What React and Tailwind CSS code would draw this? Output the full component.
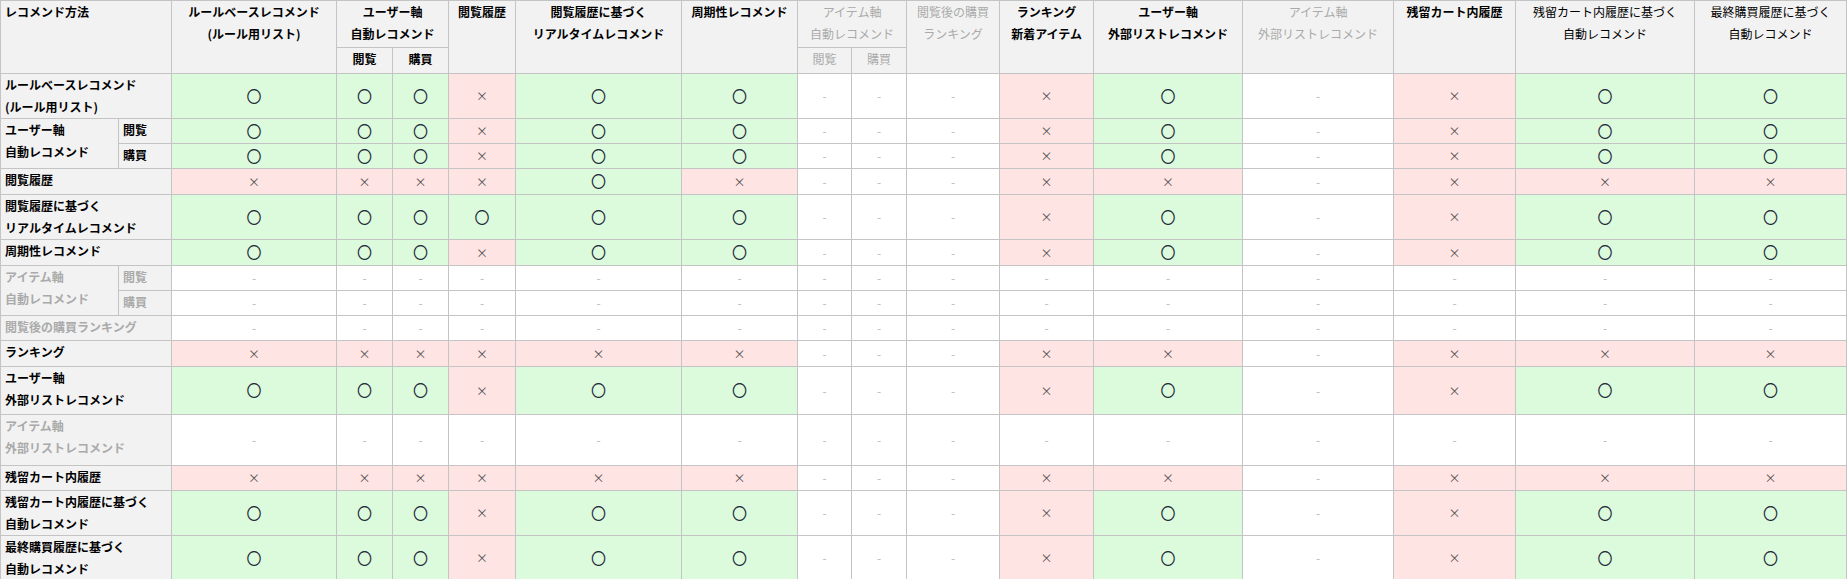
const O = "O", X = "x", D = "-";
const std = [O, O, O, X, O, O, D, D, D, X, O, D, X, O, O];
const rt = [O, O, O, O, O, O, D, D, D, X, O, D, X, O, O];
const hist = [X, X, X, X, O, X, D, D, D, X, X, D, X, X, X];
const neg = [X, X, X, X, X, X, D, D, D, X, X, D, X, X, X];
const dash = Array(15).fill(D);

const widths = [118, 53, 165, 56, 56, 67, 166, 116, 54, 55, 93, 94, 149, 151, 122, 179, 152];

function Cell({ v }) {
  if (v === O)
    return <td className="bg-[#dcfadc] border border-[#c4c4c4] text-center text-[#1f2b3a] text-[15px] align-middle p-0">〇</td>;
  if (v === X)
    return <td className="bg-[#ffe4e4] border border-[#c4c4c4] text-center text-[#555] text-[12px] align-middle p-0">×</td>;
  return <td className="bg-white border border-[#c4c4c4] text-center text-[#bbb] text-[12px] align-middle p-0">-</td>;
}

const th = "bg-[#f2f2f2] border border-[#c4c4c4] font-bold text-[12px] leading-[22px] align-top px-1";
const rh = "bg-[#f2f2f2] border border-[#c4c4c4] font-bold text-[12px] leading-[22px] text-left align-top px-1";

function Row({ label, data, h, gray }) {
  return (
    <tr style={{ height: h }}>
      <th colSpan={2} className={`${rh} ${gray ? "text-[#aaa]" : "text-black"}`}>{label}</th>
      {data.map((v, i) => <Cell key={i} v={v} />)}
    </tr>
  );
}

function SplitRows({ label, gray, a, b }) {
  const c = gray ? "text-[#aaa]" : "text-black";
  return (
    <>
      <tr style={{ height: 25 }}>
        <th rowSpan={2} className={`${rh} ${c}`}>{label}</th>
        <th className={`${rh} ${c} text-center`}>閲覧</th>
        {a.map((v, i) => <Cell key={i} v={v} />)}
      </tr>
      <tr style={{ height: 25 }}>
        <th className={`${rh} ${c} text-center`}>購買</th>
        {b.map((v, i) => <Cell key={i} v={v} />)}
      </tr>
    </>
  );
}

export default function App() {
  const g = "text-[#aaa]";
  return (
    <div className="bg-white w-[1848px] h-[579px]" style={{ fontFamily: '"Noto Sans CJK JP", "Noto Sans", sans-serif' }}>
      <table className="border-collapse table-fixed w-[1846px]">
        <colgroup>
          {widths.map((w, i) => <col key={i} style={{ width: w }} />)}
        </colgroup>
        <thead>
          <tr style={{ height: 47 }}>
            <th colSpan={2} rowSpan={2} className={`${th} text-left`}>レコメンド方法</th>
            <th rowSpan={2} className={`${th} text-center`}>ルールベースレコメンド<br />(ルール用リスト)</th>
            <th colSpan={2} className={`${th} text-center`}>ユーザー軸<br />自動レコメンド</th>
            <th rowSpan={2} className={`${th} text-center`}>閲覧履歴</th>
            <th rowSpan={2} className={`${th} text-center`}>閲覧履歴に基づく<br />リアルタイムレコメンド</th>
            <th rowSpan={2} className={`${th} text-center`}>周期性レコメンド</th>
            <th colSpan={2} className={`${th} text-center ${g} font-normal`}>アイテム軸<br />自動レコメンド</th>
            <th rowSpan={2} className={`${th} text-center ${g} font-normal`}>閲覧後の購買<br />ランキング</th>
            <th rowSpan={2} className={`${th} text-center`}>ランキング<br />新着アイテム</th>
            <th rowSpan={2} className={`${th} text-center`}>ユーザー軸<br />外部リストレコメンド</th>
            <th rowSpan={2} className={`${th} text-center ${g} font-normal`}>アイテム軸<br />外部リストレコメンド</th>
            <th rowSpan={2} className={`${th} text-center`}>残留カート内履歴</th>
            <th rowSpan={2} className={`${th} text-center font-normal`}>残留カート内履歴に基づく<br />自動レコメンド</th>
            <th rowSpan={2} className={`${th} text-center font-normal`}>最終購買履歴に基づく<br />自動レコメンド</th>
          </tr>
          <tr style={{ height: 26 }}>
            <th className={`${th} text-center`}>閲覧</th>
            <th className={`${th} text-center`}>購買</th>
            <th className={`${th} text-center ${g} font-normal`}>閲覧</th>
            <th className={`${th} text-center ${g} font-normal`}>購買</th>
          </tr>
        </thead>
        <tbody>
          <Row label={<>ルールベースレコメンド<br />(ルール用リスト)</>} data={std} h={45} />
          <SplitRows label={<>ユーザー軸<br />自動レコメンド</>} a={std} b={std} />
          <Row label="閲覧履歴" data={hist} h={26} />
          <Row label={<>閲覧履歴に基づく<br />リアルタイムレコメンド</>} data={rt} h={44} />
          <Row label="周期性レコメンド" data={std} h={26} />
          <SplitRows label={<>アイテム軸<br />自動レコメンド</>} gray a={dash} b={dash} />
          <Row label="閲覧後の購買ランキング" data={dash} h={25} gray />
          <Row label="ランキング" data={neg} h={26} />
          <Row label={<>ユーザー軸<br />外部リストレコメンド</>} data={std} h={48} />
          <Row label={<>アイテム軸<br />外部リストレコメンド</>} data={dash} h={51} gray />
          <Row label="残留カート内履歴" data={neg} h={25} />
          <Row label={<>残留カート内履歴に基づく<br />自動レコメンド</>} data={std} h={45} />
          <Row label={<>最終購買履歴に基づく<br />自動レコメンド</>} data={std} h={44} />
        </tbody>
      </table>
    </div>
  );
}
